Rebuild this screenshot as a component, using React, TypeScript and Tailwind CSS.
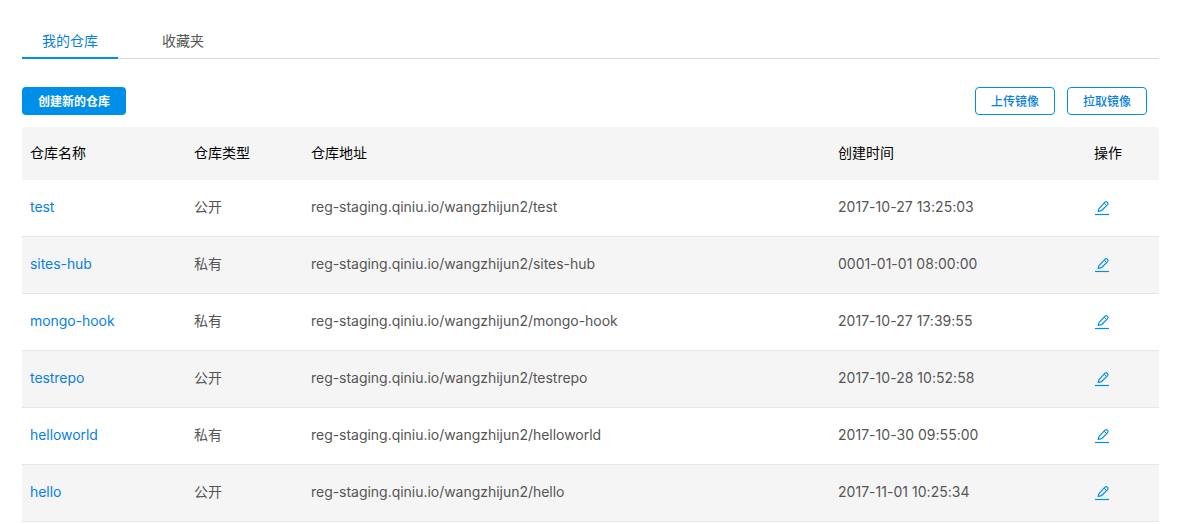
const repos = [
  { name: 'test', type: '公开', created: '2017-10-27 13:25:03' },
  { name: 'sites-hub', type: '私有', created: '0001-01-01 08:00:00' },
  { name: 'mongo-hook', type: '私有', created: '2017-10-27 17:39:55' },
  { name: 'testrepo', type: '公开', created: '2017-10-28 10:52:58' },
  { name: 'helloworld', type: '私有', created: '2017-10-30 09:55:00' },
  { name: 'hello', type: '公开', created: '2017-11-01 10:25:34' },
];

function EditIcon() {
  return (
    <svg className="block h-4 w-4" viewBox="0 0 16 16" fill="none" stroke="#008fe8" strokeWidth="1.2" strokeLinejoin="round">
      <path d="M4.2 11.5 5 8.6 11 2.2Q12 1.2 13.1 2.1L13.7 2.7Q14.5 3.6 13.6 4.6L7.4 10.7Z" />
      <path d="m10.2 3.2 2.5 2.4" strokeWidth="1" />
      <path d="M1 14.5h14" />
    </svg>
  );
}

function OutlineButton({ label }: { label: string }) {
  return (
    <button className="h-7 w-20 rounded border border-[#008fe8] bg-white pt-0.5 text-xs font-medium text-[#0a7fe2]">
      {label}
    </button>
  );
}

export default function App() {
  return (
    <div className="h-[524px] overflow-hidden bg-white pt-6 pr-5 pl-[22px] font-['Inter','Noto_Sans_CJK_SC',sans-serif] text-sm text-[#555]">
      <nav className="flex h-[35px] gap-6 border-b border-[#d9d9d9]">
        <a className="h-[35px] w-24 border-b-2 border-[#008fe8] text-center leading-[34px] text-[#0a7fe2]">我的仓库</a>
        <a className="h-[35px] px-5 leading-[34px]">收藏夹</a>
      </nav>

      <div className="mt-7 flex items-center justify-between pr-3">
        <button className="h-7 w-[104px] rounded bg-[#008fe8] pt-0.5 text-xs font-bold text-white">创建新的仓库</button>
        <div className="flex gap-3">
          <OutlineButton label="上传镜像" />
          <OutlineButton label="拉取镜像" />
        </div>
      </div>

      <table className="mt-3 w-[1137px] table-fixed border-separate border-spacing-0 text-left">
        <colgroup>
          <col className="w-[164px]" />
          <col className="w-[117px]" />
          <col className="w-[527px]" />
          <col className="w-[256px]" />
          <col className="w-[73px]" />
        </colgroup>
        <thead>
          <tr className="h-[53px] text-black">
            <th className="rounded-tl bg-[#f5f5f5] px-2 pt-0 pb-0.5 font-normal">仓库名称</th>
            <th className="bg-[#f5f5f5] px-2 pt-0 pb-0.5 font-normal">仓库类型</th>
            <th className="bg-[#f5f5f5] px-2 pt-0 pb-0.5 font-normal">仓库地址</th>
            <th className="bg-[#f5f5f5] px-2 pt-0 pb-0.5 font-normal">创建时间</th>
            <th className="rounded-tr bg-[#f5f5f5] px-2 pt-0 pb-0.5 font-normal">操作</th>
          </tr>
        </thead>
        <tbody>
          {repos.map((repo) => (
            <tr key={repo.name} className="h-[57px] even:bg-[#f5f5f5]">
              <td className="border-b border-[#e6e6e6] px-2 pt-0 pb-0.5 tracking-[-0.004em] text-[#0a7fe2]">{repo.name}</td>
              <td className="border-b border-[#e6e6e6] px-2 pt-0 pb-0.5">{repo.type}</td>
              <td className="border-b border-[#e6e6e6] px-2 pt-0 pb-0.5 tracking-[-0.002em]">reg-staging.qiniu.io/wangzhijun2/{repo.name}</td>
              <td className="border-b border-[#e6e6e6] px-2 pt-0 pb-0.5 tracking-[0.002em]">{repo.created}</td>
              <td className="border-b border-[#e6e6e6] px-2 py-0">
                <EditIcon />
              </td>
            </tr>
          ))}
        </tbody>
      </table>
    </div>
  );
}
